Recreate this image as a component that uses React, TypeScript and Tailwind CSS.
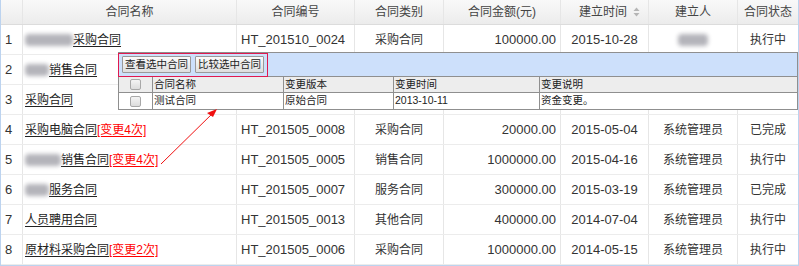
import React from "react";

type Row = {
  blur?: number;
  name: string;
  change?: string;
  code: string;
  type: string;
  amount: string;
  date: string;
  creator: string;
  creatorBlur?: boolean;
  status: string;
};

const rows: Row[] = [
  { blur: 48, name: "采购合同", code: "HT_201510_0024", type: "采购合同", amount: "100000.00", date: "2015-10-28", creator: "", creatorBlur: true, status: "执行中" },
  { blur: 24, name: "销售合同", code: "", type: "", amount: "", date: "", creator: "", status: "" },
  { name: "采购合同", code: "", type: "", amount: "", date: "", creator: "", status: "" },
  { name: "采购电脑合同", change: "[变更4次]", code: "HT_201505_0008", type: "采购合同", amount: "20000.00", date: "2015-05-04", creator: "系统管理员", status: "已完成" },
  { blur: 36, name: "销售合同", change: "[变更4次]", code: "HT_201505_0005", type: "销售合同", amount: "1000000.00", date: "2015-04-16", creator: "系统管理员", status: "执行中" },
  { blur: 24, name: "服务合同", code: "HT_201505_0007", type: "服务合同", amount: "300000.00", date: "2015-03-19", creator: "系统管理员", status: "已完成" },
  { name: "人员聘用合同", code: "HT_201505_0013", type: "其他合同", amount: "400000.00", date: "2014-07-04", creator: "系统管理员", status: "执行中" },
  { name: "原材料采购合同", change: "[变更2次]", code: "HT_201505_0006", type: "采购合同", amount: "1000000.00", date: "2014-05-15", creator: "系统管理员", status: "执行中" },
];

const cols = "grid grid-cols-[22px_214px_118px_89px_117px_88px_89px_1fr]";
const cell = "border-r border-[#e6e6e6] flex items-center overflow-hidden whitespace-nowrap";
const cjk = "text-[12px]";

function Blur({ w }: { w: number }) {
  return (
    <span className="inline-block shrink-0 h-[12px] bg-[#b4b4ba] blur-[2px] rounded-sm" style={{ width: w }} />
  );
}

function Checkbox() {
  return <span className="inline-block w-[11px] h-[11px] border border-[#a8a8a8] bg-gradient-to-b from-[#f4f4f4] to-[#dcdcdc] rounded-[2px]" />;
}

export default function App() {
  return (
    <div
      className="relative w-[799px] h-[266px] bg-white border-x border-b border-[#bcd3ef] text-[13px] text-[#333]"
      style={{ fontFamily: '"Liberation Sans", "Noto Sans CJK SC", sans-serif' }}
    >
      {/* header */}
      <div className={`${cols} h-[25px] bg-gradient-to-b from-[#f9f9f9] to-[#ececec] border-b border-[#dcdcdc] text-[#444] ${cjk}`}>
        <div className={`${cell} border-[#dcdcdc]`} />
        <div className={`${cell} border-[#dcdcdc] justify-center`}>合同名称</div>
        <div className={`${cell} border-[#dcdcdc] justify-center`}>合同编号</div>
        <div className={`${cell} border-[#dcdcdc] justify-center`}>合同类别</div>
        <div className={`${cell} border-[#dcdcdc] justify-center`}>合同金额(元)</div>
        <div className={`${cell} border-[#dcdcdc] justify-center gap-[6px] pl-[10px]`}>
          建立时间
          <svg width="7" height="10" viewBox="0 0 7 10">
            <path d="M3.5 0.5 L6.5 4 L0.5 4 Z" fill="#b5b5b5" />
            <path d="M3.5 9.5 L6.5 6 L0.5 6 Z" fill="#b5b5b5" />
          </svg>
        </div>
        <div className={`${cell} border-[#dcdcdc] justify-center`}>建立人</div>
        <div className={`${cell} border-r-0 justify-center`}>合同状态</div>
      </div>

      {rows.map((r, i) => (
        <div key={i} className={`${cols} h-[30px] border-b border-[#ececec]`}>
          <div className={`${cell} pl-[4px]`}>{i + 1}</div>
          <div className={`${cell} pl-[2px] ${cjk}`}>
            {r.blur ? <Blur w={r.blur} /> : null}
            <span className="underline underline-offset-[2px] text-[#222]">{r.name}</span>
            {r.change ? <span className="underline underline-offset-[2px] text-[#f00]">{r.change}</span> : null}
          </div>
          <div className={`${cell} pl-[4px]`}>{r.code}</div>
          <div className={`${cell} justify-center ${cjk}`}>{r.type}</div>
          <div className={`${cell} justify-end pr-[4px]`}>{r.amount}</div>
          <div className={`${cell} justify-center`}>{r.date}</div>
          <div className={`${cell} justify-center ${cjk}`}>{r.creatorBlur ? <Blur w={30} /> : r.creator}</div>
          <div className={`${cell} border-r-0 justify-center ${cjk}`}>{r.status}</div>
        </div>
      ))}

      {/* popup */}
      <div className="absolute left-[117px] top-[52px] w-[680px] border border-[#8f8f8f] bg-white text-[10.5px] text-[#222]">
        <div className="h-[24px] bg-[#cde0fb] border-b border-[#8f8f8f] flex items-center">
          <div className="h-[24px] w-[150px] -ml-px border border-[#e0194f] flex items-center gap-[4px] pl-[3px]">
            <button className="h-[17px] px-[2px] whitespace-nowrap border border-[#9a9a9a] bg-gradient-to-b from-[#fbfbfb] to-[#dedede] text-[10.5px] leading-none text-[#222] rounded-[1px]">查看选中合同</button>
            <button className="h-[17px] px-[2px] whitespace-nowrap border border-[#9a9a9a] bg-gradient-to-b from-[#fbfbfb] to-[#dedede] text-[10.5px] leading-none text-[#222] rounded-[1px]">比较选中合同</button>
          </div>
        </div>
        <div className="grid grid-cols-[34px_131px_110px_146px_1fr] h-[16px] bg-[#ededed] border-b border-[#8f8f8f]">
          <div className="border-r border-[#8f8f8f] flex items-center justify-center"><Checkbox /></div>
          <div className="border-r border-[#8f8f8f] flex items-center pl-[1px]">合同名称</div>
          <div className="border-r border-[#8f8f8f] flex items-center pl-[1px]">变更版本</div>
          <div className="border-r border-[#8f8f8f] flex items-center pl-[1px]">变更时间</div>
          <div className="flex items-center pl-[1px]">变更说明</div>
        </div>
        <div className="grid grid-cols-[34px_131px_110px_146px_1fr] h-[16px]">
          <div className="border-r border-[#8f8f8f] flex items-center justify-center"><Checkbox /></div>
          <div className="border-r border-[#8f8f8f] flex items-center pl-[1px]">测试合同</div>
          <div className="border-r border-[#8f8f8f] flex items-center pl-[1px]">原始合同</div>
          <div className="border-r border-[#8f8f8f] flex items-center pl-[1px]">2013-10-11</div>
          <div className="flex items-center pl-[1px]">资金变更。</div>
        </div>
      </div>

      {/* arrow */}
      <svg className="absolute left-0 top-0 pointer-events-none" width="799" height="266">
        <line x1="160" y1="164" x2="214" y2="111" stroke="#f01010" strokeWidth="1" />
        <path d="M216 109 L206 113 L212 117 Z" fill="#f01010" />
      </svg>
    </div>
  );
}
